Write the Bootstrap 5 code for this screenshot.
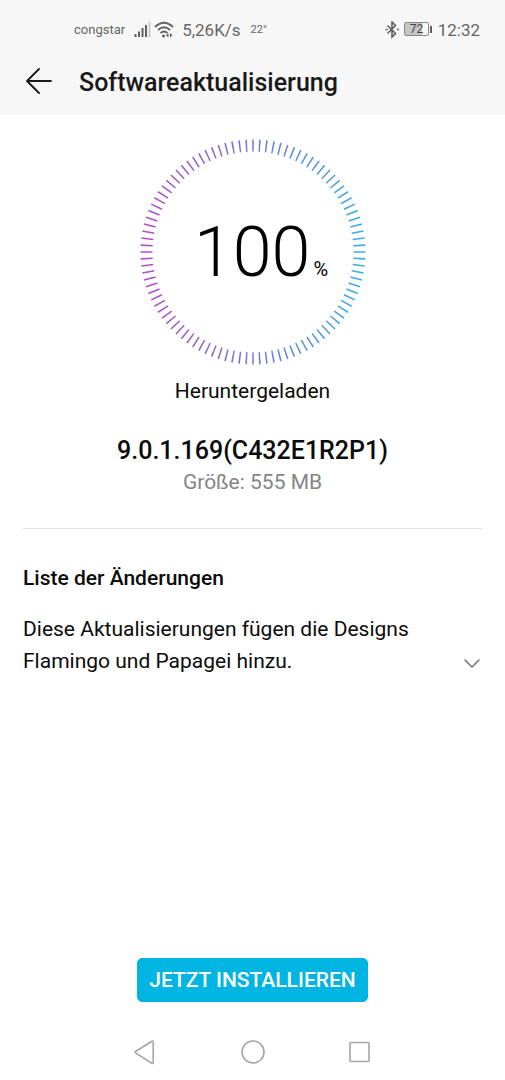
<!DOCTYPE html>
<html lang="de">
<head>
<meta charset="utf-8">
<meta name="viewport" content="width=device-width, initial-scale=1">
<title>Softwareaktualisierung</title>
<link href="https://cdn.jsdelivr.net/npm/bootstrap@5.3.0/dist/css/bootstrap.min.css" rel="stylesheet">
<style>
  body { font-family: Roboto, "Liberation Sans", sans-serif; font-size: 21px; line-height: 32px; color: #0b0b0b; background: #fff; }
  svg { display: block; flex: none; }
  .top-area { background: #f7f7f7; }
  .status-bar { height: 60px; padding: 0 25px 0 74px; color: #666; font-size: 17px; }
  .status-note { font-size: 13px; }
  .status-temp { font-size: 11px; margin-left: 10px; }
  .title-bar { height: 55px; padding: 0 25px 11px; gap: 26px; }
  .title-bar h1 { font-size: 25px; font-weight: 500; line-height: 32px; color: #191919; padding-top: 2px; }
  .title-bar .btn { --bs-btn-color: #191919; }
  .ring { width: 226px; height: 226px; margin-top: 24px; }
  .ring-value { padding-left: 17px; gap: 3px; color: #000; }
  .ring-number { font-size: 70px; font-weight: 300; line-height: 80px; }
  .ring-unit { font-size: 20px; line-height: 32px; }
  .ring-caption { margin-top: 10px; }
  .version { font-size: 25px; font-weight: 500; line-height: 32px; margin-top: 28px; }
  .size-note { color: #858585; line-height: 30px; }
  .changes { margin: 31px 23px 0; border-top: 1px solid #e3e3e3; padding-top: 33px; }
  .changes h2 { font-size: 21px; font-weight: 500; line-height: 32px; margin-bottom: 19px; }
  .changes .btn { --bs-btn-color: #777; margin-bottom: 8px; margin-right: 2px; }
  .btn-install { --bs-btn-color: #fff; --bs-btn-bg: #00b5e2; --bs-btn-hover-color: #fff; --bs-btn-hover-bg: #00a3cc; --bs-btn-border-color: #00b5e2;
    --bs-btn-border-radius: 5px; --bs-btn-font-size: 21px; --bs-btn-font-weight: 500; --bs-btn-line-height: 32px; --bs-btn-padding-x: 11px; --bs-btn-padding-y: 5px; }
  .nav-keys { height: 78px; gap: 83px; padding-top: 37px; }
  .nav-keys .btn { --bs-btn-color: #a6a6a6; }
</style>
</head>
<body class="d-flex flex-column min-vh-100">
<header class="top-area">
  <div class="status-bar d-flex align-items-center">
    <span class="status-note">congstar</span>
    <svg class="ms-2" width="21" height="18" viewBox="0 0 21 18" aria-hidden="true">
      <path d="M2.500 13v3M6 10.500v5.500M9.500 7v9M13 4v12" stroke="#606060" stroke-width="2"/>
      <path d="M16.500 1v15" stroke="#ccc" stroke-width="2"/>
    </svg>
    <svg width="20" height="18" viewBox="0 0 20 18" fill="none" stroke="#606060" stroke-width="1.800" aria-hidden="true">
      <path d="M1 6Q10-2.500 19 6M4 9Q10 3.500 16 9M6.500 12Q10 9 13.500 12"/>
      <circle cx="9.500" cy="15" r="1.500" fill="#606060" stroke="none"/>
      <path d="M14.500 12l-2.500 2.200 2.500 2.200zM16 12l2.500 2.200-2.500 2.200z" fill="#606060" stroke="none"/>
    </svg>
    <span class="ms-2">5,26K/s</span>
    <span class="status-temp">22°</span>
    <svg class="ms-auto" width="14" height="18" viewBox="0 0 14 18" fill="none" stroke="#606060" stroke-width="1.600" aria-hidden="true">
      <path d="M2.500 4.500l8 8L7 16V1l3.500 3.500-8 8M.5 8.500h2M12 8.500h2"/>
    </svg>
    <svg class="ms-1 me-1" width="31" height="18" viewBox="0 0 31 18" role="img" aria-label="Akku 72 %">
      <rect x="2" y="2" width="17" height="12" fill="#c6c6c6"/>
      <rect x="1.500" y="1.500" width="24" height="13" rx="1.500" fill="none" stroke="#888"/>
      <path d="M28 5v7" stroke="#606060" stroke-width="2"/>
      <text x="13.500" y="12" text-anchor="middle" font-size="12" font-weight="400" fill="#444">72</text>
    </svg>
    <span>12:32</span>
  </div>
  <div class="title-bar d-flex align-items-center">
    <button type="button" class="btn p-0 border-0" aria-label="Zurück">
      <svg width="28" height="28" viewBox="1 1 28 28" fill="none" stroke="currentColor" stroke-width="1.800" stroke-linecap="round" stroke-linejoin="round">
        <path d="M15 2L3 14l12 12M3 14h24"/>
      </svg>
    </button>
    <h1 class="m-0">Softwareaktualisierung</h1>
  </div>
</header>

<main class="flex-grow-1 d-flex flex-column">
  <section class="text-center">
    <div class="ring position-relative mx-auto d-flex align-items-center justify-content-center">
      <svg class="position-absolute top-0 start-0" width="226" height="226" viewBox="0 0 226 226" aria-hidden="true">
        <defs>
          <linearGradient id="ringColor" gradientUnits="userSpaceOnUse" x1="0" y1="0" x2="226" y2="0">
            <stop offset="0" stop-color="#b54ccb"/>
            <stop offset=".5" stop-color="#7779d2"/>
            <stop offset="1" stop-color="#37b0e3"/>
          </linearGradient>
        </defs>
        <circle cx="113" cy="113" r="106.500" fill="none" stroke="url(#ringColor)" stroke-width="12" pathLength="100" stroke-dasharray=".23 .77" stroke-dashoffset=".115"/>
      </svg>
      <div class="ring-value d-flex align-items-baseline">
        <span class="ring-number">100</span><span class="ring-unit">%</span>
      </div>
    </div>
    <p class="ring-caption mb-0">Heruntergeladen</p>
    <p class="version mb-0">9.0.1.169(C432E1R2P1)</p>
    <p class="size-note mb-0">Größe: 555 MB</p>
  </section>

  <section class="changes">
    <h2>Liste der Änderungen</h2>
    <div class="d-flex align-items-end justify-content-between">
      <p class="mb-0 pe-5">Diese Aktualisierungen fügen die Designs Flamingo und Papagei hinzu.</p>
      <button type="button" class="btn p-0 border-0" aria-label="Mehr anzeigen">
        <svg width="16" height="10" viewBox="0 0 16 10" fill="none" stroke="currentColor" stroke-width="1.600" stroke-linecap="round" stroke-linejoin="round"><path d="M1 1l7 7 7-7"/></svg>
      </button>
    </div>
  </section>

  <div class="mt-auto text-center">
    <button type="button" class="btn btn-install">JETZT INSTALLIEREN</button>
  </div>
</main>

<nav class="nav-keys d-flex justify-content-center align-items-start" aria-label="Systemnavigation">
  <button type="button" class="btn p-0 border-0" aria-label="Zurück">
    <svg width="24" height="26" viewBox="0 0 24 26" fill="none" stroke="currentColor" stroke-width="1.600" stroke-linejoin="round"><path d="M2.500 12.500q-1 .7 0 1.400L18.500 24q1.700 1 1.700-1V3.500q0-2-1.700-1z"/></svg>
  </button>
  <button type="button" class="btn p-0 border-0" aria-label="Startbildschirm">
    <svg width="26" height="26" viewBox="0 0 26 26" fill="none" stroke="currentColor" stroke-width="1.600"><circle cx="13" cy="13" r="11"/></svg>
  </button>
  <button type="button" class="btn p-0 border-0" aria-label="Letzte Apps">
    <svg width="24" height="26" viewBox="0 0 24 26" fill="none" stroke="currentColor" stroke-width="1.600"><rect x="1" y="3.500" width="19" height="19" rx="1"/></svg>
  </button>
</nav>
<script src="https://cdn.jsdelivr.net/npm/bootstrap@5.3.0/dist/js/bootstrap.bundle.min.js"></script>
</body>
</html>
